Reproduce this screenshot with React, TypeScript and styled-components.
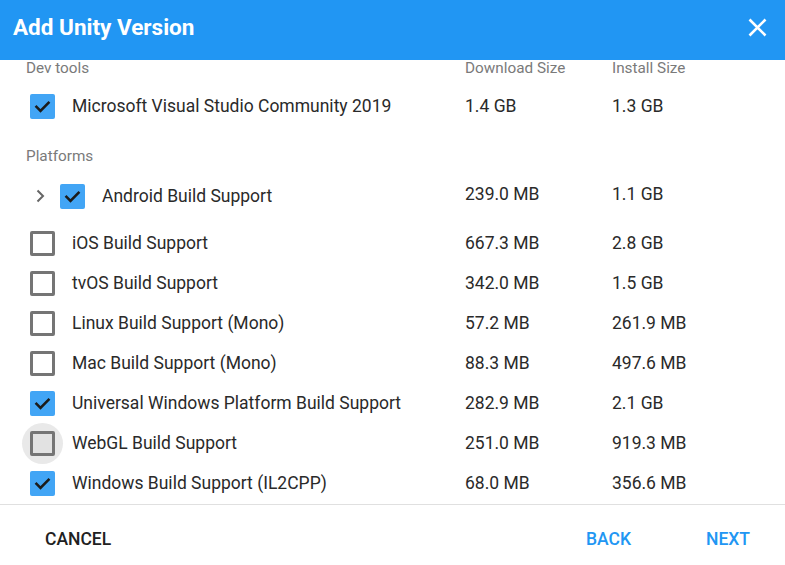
import React from "react";
import styled, { createGlobalStyle } from "styled-components";

const Global = createGlobalStyle`
  html, body { margin: 0; padding: 0; background: #ffffff; }
  body { font-family: Roboto, "Noto Sans", Arial, sans-serif; }
  * { box-sizing: border-box; }
`;

const Dialog = styled.div`
  width: 785px;
  height: 565px;
  display: flex;
  flex-direction: column;
  background: #fff;
  overflow: hidden;
`;

const Header = styled.header`
  height: 60px;
  flex: 0 0 60px;
  background: #2196f3;
  display: flex;
  align-items: center;
  justify-content: space-between;
  padding: 0 18px 6px 13px;
`;

const Title = styled.h1`
  margin: 0;
  font-size: 22.5px;
  font-weight: 700;
  color: #ffffff;
  letter-spacing: 0;
`;

const CloseButton = styled.button`
  border: 0;
  background: transparent;
  padding: 0;
  width: 20px;
  height: 20px;
  display: flex;
  align-items: center;
  justify-content: center;
  cursor: pointer;
`;

const Content = styled.div`
  flex: 1 1 auto;
  overflow: hidden;
  display: flex;
  flex-direction: column;
`;

const SectionHeader = styled.div<{ $top: number }>`
  display: grid;
  grid-template-columns: 439px 147px auto;
  padding-left: 26px;
  margin-top: ${(p) => p.$top}px;
  height: 16px;
  line-height: 16px;
  font-size: 15.3px;
  color: #7a7a7a;
`;

const Row = styled.div<{ $top?: number; $height?: number }>`
  display: grid;
  grid-template-columns: 435px 147px auto;
  align-items: center;
  padding-left: 30px;
  margin-top: ${(p) => p.$top ?? 0}px;
  height: ${(p) => p.$height ?? 40}px;
  font-size: 17.5px;
  color: #2a2a2a;
`;

const NameCell = styled.div`
  display: flex;
  align-items: center;
`;

const Label = styled.span`
  margin-left: 17px;
  white-space: nowrap;
`;

const Size = styled.span<{ $dy?: number }>`
  white-space: nowrap;
  position: relative;
  top: ${(p) => p.$dy ?? 0}px;
`;

const Expander = styled.span`
  width: 30px;
  height: 25px;
  display: flex;
  align-items: center;
  justify-content: flex-start;
  padding-left: 5px;
`;

const BoxWrap = styled.span<{ $hover?: boolean }>`
  position: relative;
  width: 25px;
  height: 25px;
  display: inline-flex;
  &::before {
    content: "";
    display: ${(p) => (p.$hover ? "block" : "none")};
    position: absolute;
    left: -8px;
    top: -8px;
    width: 41px;
    height: 41px;
    border-radius: 50%;
    background: #e9e9e9;
  }
`;

const Box = styled.span<{ $checked: boolean; $hover?: boolean }>`
  position: relative;
  width: 25px;
  height: 25px;
  border-radius: 2px;
  display: flex;
  align-items: center;
  justify-content: center;
  background: ${(p) => (p.$checked ? "#42a5f5" : p.$hover ? "#e2e2e2" : "transparent")};
  border: ${(p) => (p.$checked ? "0" : "3px solid #757575")};
`;

const Footer = styled.footer`
  flex: 0 0 61px;
  border-top: 1px solid #e0e0e0;
  display: flex;
  align-items: center;
  padding: 7px 19px 0 29px;
`;

const TextButton = styled.button<{ $primary?: boolean; $gap?: number }>`
  border: 0;
  background: transparent;
  font-family: Roboto, Arial, sans-serif;
  font-size: 17.5px;
  font-weight: 500;
  text-transform: uppercase;
  color: ${(p) => (p.$primary ? "#2196f3" : "#212121")};
  padding: 8px 16px;
  margin-left: ${(p) => p.$gap ?? 0}px;
  cursor: pointer;
`;

const Spacer = styled.div`
  flex: 1;
`;

const Check = () => (
  <svg width="25" height="25" viewBox="0 0 25 25">
    <polyline
      points="6.5,12.8 10.5,16.8 18.5,8.8"
      fill="none"
      stroke="#1b1b1b"
      strokeWidth="2.6"
      strokeLinecap="square"
    />
  </svg>
);

const Checkbox = ({ checked, hover }: { checked: boolean; hover?: boolean }) => (
  <BoxWrap $hover={hover}>
    <Box $checked={checked} $hover={hover}>
      {checked && <Check />}
    </Box>
  </BoxWrap>
);

const Chevron = () => (
  <svg width="12" height="14" viewBox="0 0 12 14">
    <polyline points="2.5,1.5 8,7 2.5,12.5" fill="none" stroke="#666" strokeWidth="2" />
  </svg>
);

const CloseIcon = () => (
  <svg width="19" height="19" viewBox="0 0 19 19">
    <path d="M1.5 1.5 L17.5 17.5 M17.5 1.5 L1.5 17.5" stroke="#fff" strokeWidth="2.6" fill="none" />
  </svg>
);

type Item = { name: string; dl: string; inst: string; checked: boolean; hover?: boolean };

const platforms: Item[] = [
  { name: "iOS Build Support", dl: "667.3 MB", inst: "2.8 GB", checked: false },
  { name: "tvOS Build Support", dl: "342.0 MB", inst: "1.5 GB", checked: false },
  { name: "Linux Build Support (Mono)", dl: "57.2 MB", inst: "261.9 MB", checked: false },
  { name: "Mac Build Support (Mono)", dl: "88.3 MB", inst: "497.6 MB", checked: false },
  { name: "Universal Windows Platform Build Support", dl: "282.9 MB", inst: "2.1 GB", checked: true },
  { name: "WebGL Build Support", dl: "251.0 MB", inst: "919.3 MB", checked: false, hover: true },
  { name: "Windows Build Support (IL2CPP)", dl: "68.0 MB", inst: "356.6 MB", checked: true },
];

export default function App() {
  return (
    <>
      <Global />
      <Dialog>
        <Header>
          <Title>Add Unity Version</Title>
          <CloseButton aria-label="close">
            <CloseIcon />
          </CloseButton>
        </Header>
        <Content>
          <SectionHeader $top={0}>
            <span>Dev tools</span>
            <span>Download Size</span>
            <span>Install Size</span>
          </SectionHeader>
          <Row $top={10}>
            <NameCell>
              <Checkbox checked />
              <Label>Microsoft Visual Studio Community 2019</Label>
            </NameCell>
            <Size>1.4 GB</Size>
            <Size>1.3 GB</Size>
          </Row>
          <SectionHeader $top={22}>
            <span>Platforms</span>
          </SectionHeader>
          <Row $top={12} $height={40}>
            <NameCell>
              <Expander>
                <Chevron />
              </Expander>
              <Checkbox checked />
              <Label>Android Build Support</Label>
            </NameCell>
            <Size $dy={-2}>239.0 MB</Size>
            <Size $dy={-2}>1.1 GB</Size>
          </Row>
          <Row $top={7}>
            <NameCell>
              <Checkbox checked={platforms[0].checked} />
              <Label>{platforms[0].name}</Label>
            </NameCell>
            <Size>{platforms[0].dl}</Size>
            <Size>{platforms[0].inst}</Size>
          </Row>
          {platforms.slice(1).map((p) => (
            <Row key={p.name}>
              <NameCell>
                <Checkbox checked={p.checked} hover={p.hover} />
                <Label>{p.name}</Label>
              </NameCell>
              <Size>{p.dl}</Size>
              <Size>{p.inst}</Size>
            </Row>
          ))}
        </Content>
        <Footer>
          <TextButton>Cancel</TextButton>
          <Spacer />
          <TextButton $primary>Back</TextButton>
          <TextButton $primary $gap={43}>Next</TextButton>
        </Footer>
      </Dialog>
    </>
  );
}
